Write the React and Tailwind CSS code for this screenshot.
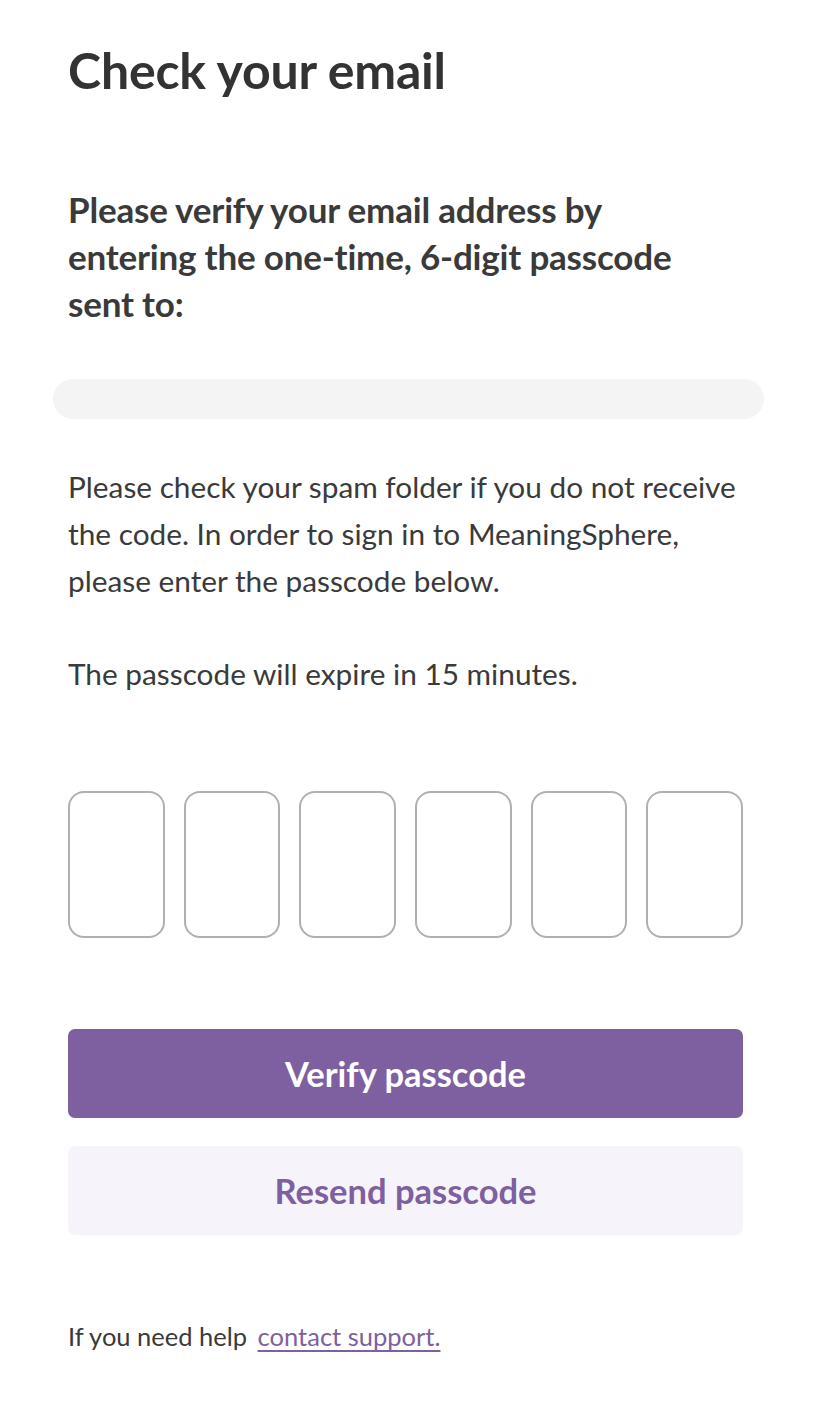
export default function App() {
  const font = { fontFamily: 'Lato, "Noto Sans", sans-serif' };
  return (
    <div className="min-h-[1414px] w-full bg-white text-[#333333]" style={font}>
      <div className="pl-[68px] pr-[74px] pt-[40px]">
        <h1 className="text-[50px] font-bold leading-[60px] tracking-[-0.2px] text-[#333333]">
          Check your email
        </h1>

        <p className="mt-[86px] text-[35px] font-bold leading-[47px] tracking-[-0.2px] text-[#3a3a3a]">
          Please verify your email address by
          <br />
          entering the one-time, 6-digit passcode
          <br />
          sent to:
        </p>

        <div className="-ml-[15px] -mr-[21px] mt-[52px] h-[40px] rounded-full bg-[#f4f4f4]" />

        <div className="mt-[44px] text-[29.8px] leading-[47px] text-[#3a3a3a]">
          <p>
            Please check your spam folder if you do not receive
            <br />
            the code. In order to sign in to MeaningSphere,
            <br />
            please enter the passcode below.
          </p>
          <p className="mt-[46px]">The passcode will expire in 15 minutes.</p>
        </div>

        <div className="mt-[94px] flex gap-[19px]">
          {[0, 1, 2, 3, 4, 5].map((i) => (
            <input
              key={i}
              type="text"
              maxLength={1}
              className="h-[147px] min-w-0 flex-1 rounded-[16px] border-2 border-[#b0b0b0] bg-white text-center text-[40px] outline-none"
            />
          ))}
        </div>

        <div className="mt-[91px] flex flex-col gap-[28px]">
          <button className="h-[89px] w-full rounded-[7px] bg-[#7e5f9f] text-[34.5px] font-bold text-white">
            Verify passcode
          </button>
          <button className="h-[89px] w-full rounded-[7px] bg-[#f6f4fa] text-[34.5px] font-bold text-[#7e5f9f]">
            Resend passcode
          </button>
        </div>

        <p className="mt-[82px] text-[25.5px] text-[#3a3a3a]">
          If you need help{' '}
          <a href="#" className="ml-[4px] text-[#7e5f9f] underline underline-offset-4">
            contact support.
          </a>
        </p>
      </div>
    </div>
  );
}
